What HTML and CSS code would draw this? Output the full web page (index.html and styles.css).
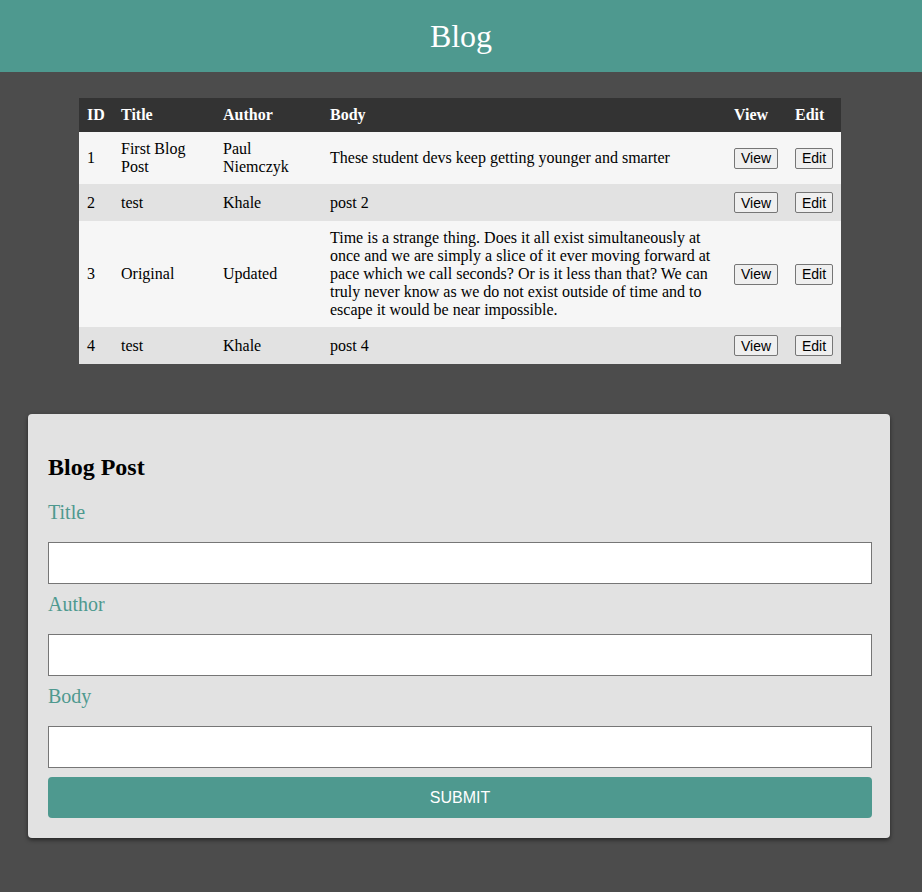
FILE: index.html
```html
<!DOCTYPE html>
<html>
<head>
<meta charset="utf-8">
<link rel="stylesheet" href="styles.css">
</head>
<body>
<header class="top">
  <h1 class="brand">Blog</h1>
</header>
<main class="content">
  <table class="posts">
    <colgroup>
      <col class="c-id"><col class="c-title"><col class="c-author"><col class="c-body"><col class="c-view"><col class="c-edit">
    </colgroup>
    <thead>
      <tr><th>ID</th><th>Title</th><th>Author</th><th>Body</th><th>View</th><th>Edit</th></tr>
    </thead>
    <tbody>
      <tr><td>1</td><td>First Blog Post</td><td>Paul Niemczyk</td><td>These student devs keep getting younger and smarter</td><td><button class="btn">View</button></td><td><button class="btn">Edit</button></td></tr>
      <tr><td>2</td><td>test</td><td>Khale</td><td>post 2</td><td><button class="btn">View</button></td><td><button class="btn">Edit</button></td></tr>
      <tr><td>3</td><td>Original</td><td>Updated</td><td>Time is a strange thing. Does it all exist simultaneously at once and we are simply a slice of it ever moving forward at pace which we call seconds? Or is it less than that? We can truly never know as we do not exist outside of time and to escape it would be near impossible.</td><td><button class="btn">View</button></td><td><button class="btn">Edit</button></td></tr>
      <tr><td>4</td><td>test</td><td>Khale</td><td>post 4</td><td><button class="btn">View</button></td><td><button class="btn">Edit</button></td></tr>
    </tbody>
  </table>

  <form class="card">
    <h2 class="card-title">Blog Post</h2>
    <label class="field-label">Title</label>
    <input class="field" type="text">
    <label class="field-label">Author</label>
    <input class="field" type="text">
    <label class="field-label">Body</label>
    <input class="field" type="text">
    <button class="submit" type="button">SUBMIT</button>
  </form>
</main>
</body>
</html>
```
FILE: styles.css
```css
html, body {
  margin: 0;
  padding: 0;
}
body {
  background: #4c4c4c;
  font-family: "Liberation Serif", "Times New Roman", serif;
  font-size: 16px;
  color: #000;
}
.top {
  background: #4e998f;
  height: 72px;
  display: flex;
  align-items: center;
  justify-content: center;
}
.brand {
  margin: 0;
  color: #fff;
  font-size: 32px;
  font-weight: normal;
  font-family: "Liberation Serif", serif;
}
.content {
  padding: 26px 0 54px;
}
.posts {
  width: 762px;
  margin: 0 0 0 79px;
  border-collapse: collapse;
  table-layout: fixed;
}
.c-id { width: 34px; }
.c-title { width: 102px; }
.c-author { width: 107px; }
.c-body { width: 404px; }
.c-view { width: 61px; }
.c-edit { width: 54px; }
.posts th {
  background: #333;
  color: #fff;
  text-align: left;
  font-weight: bold;
  padding: 8px;
}
.posts td {
  padding: 8px;
  vertical-align: middle;
}
.posts tbody tr:nth-child(odd) td { background: #f6f6f6; }
.posts tbody tr:nth-child(even) td { background: #e2e2e2; }
.btn {
  font-family: "Liberation Sans", Arial, sans-serif;
  font-size: 14px;
  height: 21px;
  background: #efefef;
  border: 1px solid #767676;
  border-radius: 2px;
  padding: 0 6px;
  color: #000;
  vertical-align: middle;
}
.card {
  display: flex;
  flex-direction: column;
  width: 824px;
  margin: 50px 0 0 28px;
  padding: 20px 18px 20px 20px;
  background: #e2e2e2;
  border-radius: 4px;
  box-shadow: 0 2px 4px rgba(0,0,0,0.5);
}
.card-title {
  margin: 20px 0 20px;
  font-size: 24px;
  font-weight: bold;
}
.field-label {
  color: #4e998f;
  font-size: 20px;
  margin: 0 0 18px;
}
.field + .field-label {
  margin-top: 9px;
}
.field {
  height: 42px;
  box-sizing: border-box;
  border: 1px solid #767676;
  background: #fff;
  margin: 0;
}
.submit {
  margin-top: 9px;
  height: 41px;
  background: #4e998f;
  color: #fff;
  border: none;
  border-radius: 4px;
  font-family: "Liberation Sans", Arial, sans-serif;
  font-size: 16px;
}
```
